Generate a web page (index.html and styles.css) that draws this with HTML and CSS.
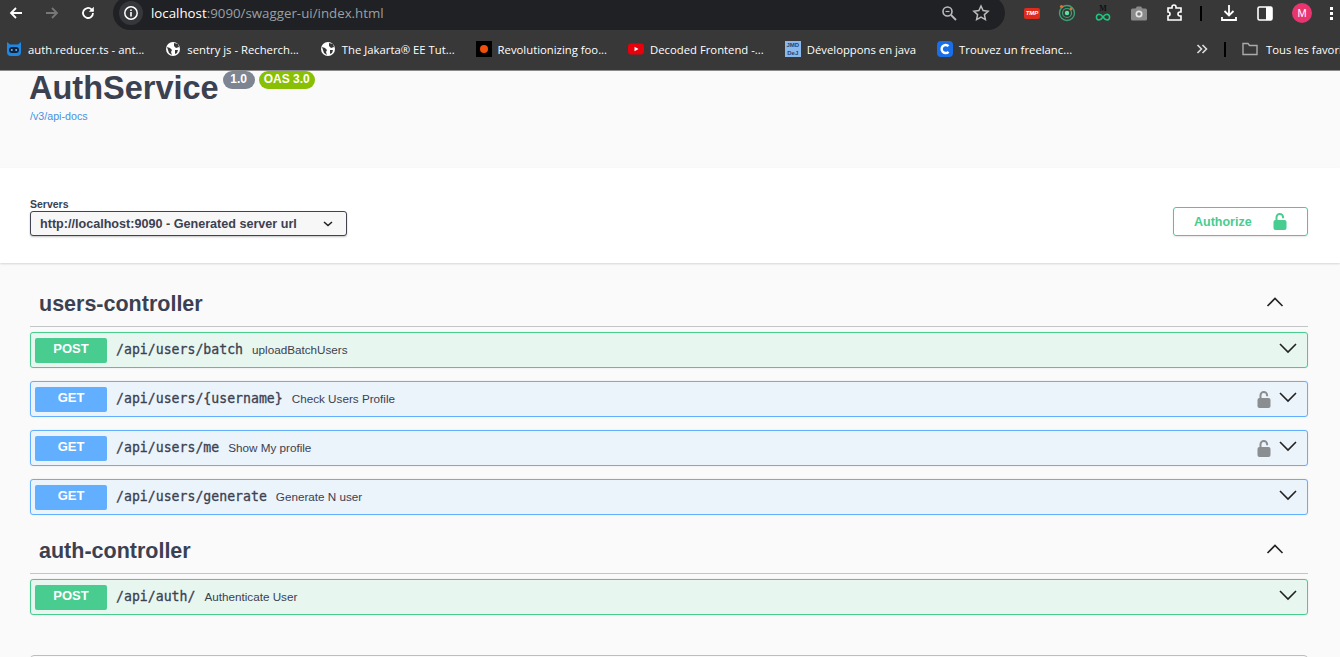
FILE: index.html
```html
<!DOCTYPE html>
<html lang="en">

<head>
  <meta charset="UTF-8">
  <meta name="viewport" content="width=device-width, initial-scale=1.0">
  <title>Swagger UI</title>

  <link rel="stylesheet" href="styles.css">
</head>

<body>
  <div class="toolbar">
    <svg class="nav_icon" width="16" height="16" viewBox="0 0 16 16"><path d="M14 8H3M8 3 3 8l5 5" fill="none" stroke="#fff" stroke-width="1.8"/></svg>
    <svg class="nav_icon" width="16" height="16" viewBox="0 0 16 16"><path d="M2 8h11M8 3l5 5-5 5" fill="none" stroke="#777" stroke-width="1.8"/></svg>
    <svg class="nav_icon" width="16" height="16" viewBox="0 0 16 16"><path d="M13 8a5 5 0 1 1-1.5-3.6L13 6" fill="none" stroke="#fff" stroke-width="1.8"/><path d="M13.8 1.8v5h-5z" fill="#fff"/></svg>
    <div class="omnibox">
      <span class="info_chip">
        <svg width="16" height="16" viewBox="0 0 16 16"><circle cx="8" cy="8" r="6.2" fill="none" stroke="#fff" stroke-width="1.5"/><path d="M7.2 7h1.6v4.4H7.2zM7.2 4.4h1.6V6H7.2z" fill="#fff"/></svg>
      </span>
      <span class="url"><span class="url_host">localhost</span>:9090/swagger-ui/index.html</span>
      <span class="omni_end">
        <svg width="18" height="18" viewBox="0 0 18 18"><circle cx="7.5" cy="7.5" r="4.5" fill="none" stroke="#bbb" stroke-width="1.6"/><path d="M11 11l5 5" stroke="#bbb" stroke-width="1.8"/><path d="M5.5 7.5h4" stroke="#bbb" stroke-width="1.2"/></svg>
        <svg width="18" height="18" viewBox="0 0 18 18"><path d="M9 2l2.1 4.6 5 .6-3.7 3.4 1 5L9 13.1l-4.4 2.5 1-5L1.9 7.2l5-.6z" fill="none" stroke="#bbb" stroke-width="1.5"/></svg>
      </span>
    </div>
    <div class="extensions">
      <span class="ext_tmp">TMP</span>
      <svg width="18" height="18" viewBox="0 0 18 18"><circle cx="9" cy="9" r="7.5" fill="none" stroke="#3aa374" stroke-width="1.4"/><circle cx="9" cy="9" r="4.5" fill="none" stroke="#3aa374" stroke-width="1.2"/><circle cx="9" cy="9" r="2.2" fill="#5fe0a8"/><circle cx="3.5" cy="2.5" r="1.6" fill="#e2702e"/><circle cx="13" cy="5" r="1.4" fill="#e2702e"/></svg>
      <svg width="18" height="18" viewBox="0 0 18 18"><text x="9" y="7" text-anchor="middle" class="ext_m">M</text><path d="M9 13c-1.500-2-2.800-2.700-4.200-2.700a2.900 2.900 0 0 0 0 5.700c1.400 0 2.700-.7 4.200-3 1.500 2.300 2.800 3 4.200 3a2.900 2.900 0 0 0 0-5.700c-1.400 0-2.700.7-4.200 2.700z" fill="none" stroke="#1fc77e" stroke-width="1.500"/></svg>
      <svg width="18" height="18" viewBox="0 0 18 18"><path d="M2.500 4.500h3L7 2.500h4l1.500 2h3a1.500 1.500 0 0 1 1.500 1.500v9a1.500 1.500 0 0 1-1.500 1.500h-13A1.500 1.500 0 0 1 1 15V6a1.500 1.500 0 0 1 1.500-1.500z" fill="#8a8a8a"/><circle cx="9" cy="10" r="3.500" fill="#e6e6e6"/><circle cx="9" cy="10" r="1.800" fill="#777"/></svg>
      <svg width="18" height="18" viewBox="0 0 18 18"><path d="M2 4h4V3a2 2 0 0 1 4 0v1h5v4h-1a2 2 0 0 0 0 4h1v4H2v-4a2 2 0 0 0 0-4z" fill="none" stroke="#fff" stroke-width="1.6"/></svg>
      <span class="sep"></span>
      <svg width="18" height="18" viewBox="0 0 18 18"><path d="M9 1v10M4.500 7 9 11.500 13.500 7" fill="none" stroke="#fff" stroke-width="1.8"/><path d="M2 13v3h14v-3" fill="none" stroke="#fff" stroke-width="1.8"/></svg>
      <svg width="18" height="18" viewBox="0 0 18 18"><rect x="2" y="3" width="14" height="13" rx="1.5" fill="none" stroke="#fff" stroke-width="1.6"/><rect x="10" y="3" width="6" height="13" fill="#fff"/></svg>
      <span class="avatar">M</span>
      <span class="menu_dots"><i></i><i></i><i></i></span>
    </div>
  </div>

  <div class="bookmarks">
    <span class="bookmark"><svg width="16" height="16" viewBox="0 0 16 16"><path d="M1 1l3 2.500h8L15 1v10a4 4 0 0 1-4 4H5a4 4 0 0 1-4-4z" fill="#1e88e5"/><rect x="3" y="6" width="10" height="6" rx="3" fill="#10233a"/><circle cx="5.8" cy="9" r="1" fill="#6cb6f5"/><circle cx="10.2" cy="9" r="1" fill="#6cb6f5"/></svg>auth.reducer.ts - ant...</span>
    <span class="bookmark"><svg width="16" height="16" viewBox="0 0 16 16"><circle cx="8" cy="8" r="7" fill="#fff"/><path d="M2 6l3 1 2 2-1 2 1 3-3-2zM9 2l4 1 1 3-3 1-2-2zM10 9h3l-1 3-2 1z" fill="#383838"/></svg>sentry js - Recherch...</span>
    <span class="bookmark"><svg width="16" height="16" viewBox="0 0 16 16"><circle cx="8" cy="8" r="7" fill="#fff"/><path d="M2 6l3 1 2 2-1 2 1 3-3-2zM9 2l4 1 1 3-3 1-2-2zM10 9h3l-1 3-2 1z" fill="#383838"/></svg>The Jakarta® EE Tut...</span>
    <span class="bookmark"><svg width="16" height="16" viewBox="0 0 16 16"><rect width="16" height="16" fill="#000"/><circle cx="8" cy="8" r="4" fill="#f04e0b"/></svg>Revolutionizing foo...</span>
    <span class="bookmark"><svg width="16" height="16" viewBox="0 0 16 16"><rect y="2.500" width="16" height="11" rx="3" fill="#e8000b"/><path d="M6.500 5.800v4.400L10.500 8z" fill="#fff"/></svg>Decoded Frontend -...</span>
    <span class="bookmark"><span class="fav_jmd">JMD<br>DeJ</span>Développons en java</span>
    <span class="bookmark"><svg width="16" height="16" viewBox="0 0 16 16"><rect width="16" height="16" rx="4" fill="#1a6fe8"/><path d="M11.500 5.200a4 4 0 1 0 0 5.600" fill="none" stroke="#fff" stroke-width="2.400"/></svg>Trouvez un freelanc...</span>
    <span class="more_marks">
      <svg width="12" height="12" viewBox="0 0 12 12"><path d="M1.500 2l4 4-4 4M6.500 2l4 4-4 4" fill="none" stroke="#ddd" stroke-width="1.6"/></svg>
    </span>
    <span class="sep"></span>
    <span class="all_marks"><svg width="16" height="16" viewBox="0 0 16 16"><path d="M1 13.500v-11h5l1.500 2h7.500v9z" fill="none" stroke="#aaa" stroke-width="1.4"/></svg>Tous les favoris</span>
  </div>

  <div class="info">
    <div class="title_row">
      <h1 class="title">AuthService</h1>
      <span class="badge badge_version">1.0</span>
      <span class="badge badge_oas">OAS 3.0</span>
    </div>
    <a class="docs_link">/v3/api-docs</a>
  </div>

  <div class="schemes">
    <div class="servers">
      <div class="servers_label">Servers</div>
      <div class="server_select">
        <span>http://localhost:9090 - Generated server url</span>
        <svg width="10" height="6" viewBox="0 0 10 6"><path d="M1 1l4 3.500L9 1" fill="none" stroke="#222" stroke-width="1.6"/></svg>
      </div>
    </div>
    <div class="authorize">
      <span>Authorize</span>
      <svg width="14" height="17" viewBox="0 0 14 17"><path d="M3.500 8V4.300a3.300 3.300 0 0 1 6.600 0v1" fill="none" stroke="#49cc90" stroke-width="2"/><rect x=".5" y="7" width="13" height="10" rx="2" fill="#49cc90"/></svg>
    </div>
  </div>

  <div class="content">
    <div class="tag">
      <h3>users-controller</h3>
      <svg width="20" height="20" viewBox="0 0 20 20"><path d="M2.500 14L10 6.500 17.500 14" fill="none" stroke="#222" stroke-width="1.6"/></svg>
    </div>
    <div class="op op_post">
      <span class="method">POST</span>
      <span class="path">/api/users/batch</span>
      <span class="summary">uploadBatchUsers</span>
      <svg class="chevron" width="20" height="20" viewBox="0 0 20 20"><path d="M2 6l8 8 8-8" fill="none" stroke="#222" stroke-width="1.6"/></svg>
    </div>
    <div class="op op_get">
      <span class="method">GET</span>
      <span class="path">/api/users/{username}</span>
      <span class="summary">Check Users Profile</span>
      <svg class="lock" width="14" height="17" viewBox="0 0 14 17"><path d="M3.500 8V4.300a3.300 3.300 0 0 1 6.600 0v1" fill="none" stroke="#8b8e91" stroke-width="2"/><rect x=".5" y="7" width="13" height="10" rx="2" fill="#8b8e91"/></svg>
      <svg class="chevron" width="20" height="20" viewBox="0 0 20 20"><path d="M2 6l8 8 8-8" fill="none" stroke="#222" stroke-width="1.6"/></svg>
    </div>
    <div class="op op_get">
      <span class="method">GET</span>
      <span class="path">/api/users/me</span>
      <span class="summary">Show My profile</span>
      <svg class="lock" width="14" height="17" viewBox="0 0 14 17"><path d="M3.500 8V4.300a3.300 3.300 0 0 1 6.600 0v1" fill="none" stroke="#8b8e91" stroke-width="2"/><rect x=".5" y="7" width="13" height="10" rx="2" fill="#8b8e91"/></svg>
      <svg class="chevron" width="20" height="20" viewBox="0 0 20 20"><path d="M2 6l8 8 8-8" fill="none" stroke="#222" stroke-width="1.6"/></svg>
    </div>
    <div class="op op_get">
      <span class="method">GET</span>
      <span class="path">/api/users/generate</span>
      <span class="summary">Generate N user</span>
      <svg class="chevron" width="20" height="20" viewBox="0 0 20 20"><path d="M2 6l8 8 8-8" fill="none" stroke="#222" stroke-width="1.6"/></svg>
    </div>

    <div class="tag tag_second">
      <h3>auth-controller</h3>
      <svg width="20" height="20" viewBox="0 0 20 20"><path d="M2.500 14L10 6.500 17.500 14" fill="none" stroke="#222" stroke-width="1.6"/></svg>
    </div>
    <div class="op op_post">
      <span class="method">POST</span>
      <span class="path">/api/auth/</span>
      <span class="summary">Authenticate User</span>
      <svg class="chevron" width="20" height="20" viewBox="0 0 20 20"><path d="M2 6l8 8 8-8" fill="none" stroke="#222" stroke-width="1.6"/></svg>
    </div>

    <div class="models"></div>
  </div>
</body>

</html>
```
FILE: styles.css
```css
* {
  box-sizing: border-box;
  margin: 0;
  padding: 0;
}

html,
body {
  background-color: #fafafa;
  height: 657px;
  overflow: hidden;
}

body {
  color: #3b4151;
  font-family: "Liberation Sans", Arial, sans-serif;
}

svg {
  display: block;
  flex-shrink: 0;
}

/* browser chrome */
.toolbar {
  align-items: center;
  background-color: #383838;
  display: flex;
  height: 30px;
  overflow: hidden;
  padding: 0 0 4px 8px;
}

.nav_icon {
  margin-right: 20px;
}

.omnibox {
  align-items: center;
  background-color: #202124;
  border-radius: 17px;
  display: flex;
  flex-shrink: 0;
  height: 34px;
  margin-left: -3px;
  padding: 0 15px 0 6px;
  width: 892px;
}

.info_chip {
  align-items: center;
  background-color: #36373a;
  border-radius: 50%;
  display: flex;
  height: 24px;
  justify-content: center;
  width: 24px;
}

.url {
  color: #9aa0a6;
  font-family: "Open Sans", sans-serif;
  font-size: 13.3px;
  margin-left: 8px;
}

.url_host {
  color: #ffffff;
}

.omni_end {
  align-items: center;
  display: flex;
  gap: 14px;
  margin-left: auto;
}

.extensions {
  align-items: center;
  display: flex;
  flex-shrink: 0;
  gap: 18px;
  padding-left: 18px;
}

.extensions .sep {
  margin-left: -2px;
}

.ext_tmp {
  background-color: #dd2c1c;
  border-radius: 2px;
  color: #ffffff;
  font-size: 6px;
  font-style: italic;
  font-weight: bold;
  line-height: 11px;
  margin-left: 1px;
  text-align: center;
  width: 16px;
}

.ext_m {
  fill: #111111;
  font-family: "Liberation Serif", serif;
  font-size: 8px;
  font-weight: bold;
}

.sep {
  background-color: #000000;
  flex-shrink: 0;
  height: 15px;
  width: 2px;
}

.avatar {
  align-items: center;
  background-color: #e8356f;
  border-radius: 50%;
  color: #ffffff;
  display: flex;
  font-size: 11px;
  height: 20px;
  justify-content: center;
  width: 20px;
}

.menu_dots {
  display: flex;
  flex-direction: column;
  gap: 2px;
}

.menu_dots i {
  background-color: #ffffff;
  display: block;
  height: 3px;
  width: 3px;
}

.bookmarks {
  align-items: center;
  background-color: #383838;
  border-bottom: 1px solid #8a8a8a;
  color: #ffffff;
  display: flex;
  font-family: "Open Sans", sans-serif;
  font-size: 11.3px;
  height: 41px;
  padding: 0 0 2px 6px;
  white-space: nowrap;
}

.bookmark {
  align-items: center;
  display: flex;
  flex-shrink: 0;
  gap: 6px;
  margin-right: 21px;
}

.fav_jmd {
  background-color: #8ab8ea;
  color: #27446a;
  font-family: "Liberation Sans", sans-serif;
  font-size: 6px;
  font-weight: bold;
  height: 16px;
  line-height: 8px;
  text-align: center;
  width: 16px;
}

.more_marks {
  flex-shrink: 0;
  margin: 0 16px 0 103px;
}

.all_marks {
  align-items: center;
  display: flex;
  flex-shrink: 0;
  gap: 8px;
  margin-left: 16px;
}

/* swagger info */
.info {
  height: 97px;
  padding-left: 30px;
}

.title_row {
  align-items: flex-start;
  display: flex;
}

.title {
  font-size: 32.5px;
  font-weight: bold;
  line-height: 34px;
  margin: 0 4px 0 -1px;
}

.badge {
  border-radius: 9px;
  color: #ffffff;
  font-size: 12px;
  font-weight: bold;
  height: 18px;
  line-height: 16px;
  margin-right: 4px;
  text-align: center;
}

.badge_version {
  background-color: #7d8492;
  width: 32px;
}

.badge_oas {
  background-color: #89bf04;
  width: 56px;
}

.docs_link {
  color: #4990e2;
  display: block;
  font-size: 10.7px;
  line-height: 14px;
  margin-top: 4px;
}

.schemes {
  align-items: flex-end;
  background-color: #ffffff;
  box-shadow: 0 1px 2px rgba(0, 0, 0, 0.15);
  display: flex;
  height: 95px;
  justify-content: space-between;
  padding: 0 32px 27px 30px;
}

.servers_label {
  color: #3b4151;
  font-size: 10.5px;
  font-weight: bold;
  line-height: 12px;
  margin-bottom: 1px;
}

.server_select {
  align-items: center;
  background-color: #f7f7f7;
  border: 1px solid #41444e;
  border-radius: 3px;
  box-shadow: 0 1px 2px rgba(0, 0, 0, 0.25);
  color: #3b4151;
  display: flex;
  font-size: 12.6px;
  font-weight: bold;
  height: 25px;
  justify-content: space-between;
  padding: 0 13px 0 9px;
  width: 317px;
}

.authorize {
  align-items: center;
  border: 1px solid #49cc90;
  border-radius: 3px;
  box-shadow: 0 1px 2px rgba(0, 0, 0, 0.1);
  color: #49cc90;
  display: flex;
  font-size: 12.5px;
  font-weight: bold;
  gap: 21px;
  height: 29px;
  padding-left: 20px;
  width: 135px;
}

/* operations */
.content {
  padding: 20px 32px 0 30px;
}

.tag {
  align-items: center;
  border-bottom: 1px solid #c4c5c7;
  display: flex;
  height: 44px;
  justify-content: space-between;
  margin-bottom: 5px;
  padding: 0 23px 0 9px;
}

.tag svg {
  margin-bottom: 6px;
}

.tag_second {
  margin-top: 15px;
}

.tag h3 {
  font-size: 21.5px;
  font-weight: bold;
}

.op {
  align-items: center;
  border: 1px solid;
  border-radius: 3px;
  box-shadow: 0 0 2px rgba(0, 0, 0, 0.1);
  display: flex;
  height: 36px;
  margin-bottom: 13px;
  padding: 0 9px 0 4px;
}

.op_post {
  background-color: #e8f6f0;
  border-color: #49cc90;
}

.op_get {
  background-color: #ebf3fb;
  border-color: #61affe;
}

.method {
  border-radius: 2px;
  color: #ffffff;
  font-size: 13px;
  font-weight: bold;
  height: 25px;
  line-height: 21px;
  text-align: center;
  width: 72px;
}

.op_post .method {
  background-color: #49cc90;
}

.op_get .method {
  background-color: #61affe;
}

.path {
  -webkit-text-stroke: 0.3px #3b4151;
  color: #3b4151;
  font-family: "DejaVu Sans Mono", monospace;
  font-size: 13.2px;
  line-height: 16px;
  margin: 0 0 1px 9px;
}

.summary {
  color: #3b4151;
  font-size: 11.7px;
  line-height: 16px;
  margin: 0 0 1px 9px;
}

.lock {
  margin-left: auto;
}

.chevron {
  margin: 0 0 4px auto;
}

.lock + .chevron {
  margin-left: 7px;
}

.models {
  border: 1px solid #bdbdbd;
  border-radius: 4px;
  height: 40px;
  margin-top: 40px;
}
```
